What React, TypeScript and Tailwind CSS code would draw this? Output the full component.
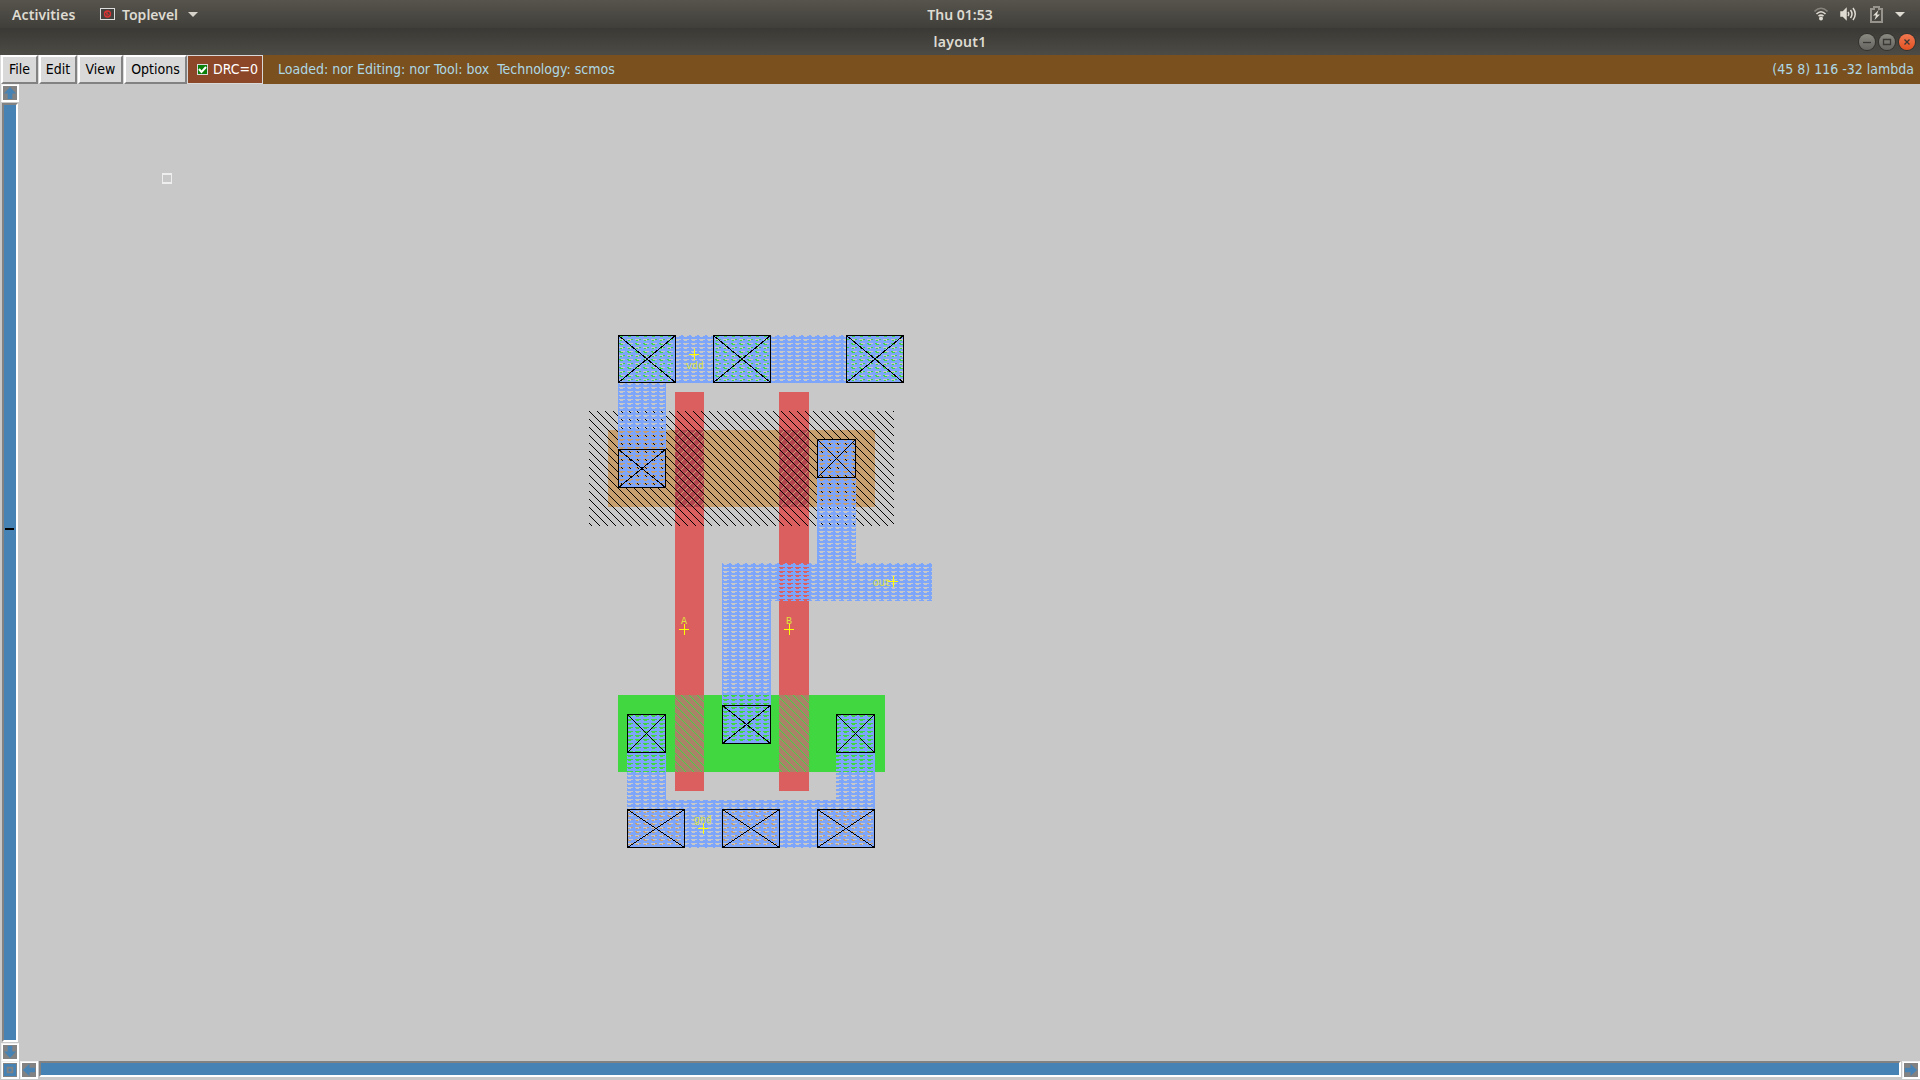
import React from "react";

type Box = [number, number, number, number];

const metal: Box[] = [
  [618, 336, 286, 48],
  [618, 384, 48, 105],
  [817, 440, 39, 124],
  [722, 564, 210, 38],
  [722, 602, 49, 143],
  [627, 715, 39, 86],
  [836, 715, 39, 86],
  [627, 801, 248, 48],
];
const contacts: Box[] = [
  [618, 336, 58, 48],
  [713, 336, 58, 48],
  [846, 336, 58, 48],
  [618, 450, 48, 39],
  [817, 440, 39, 39],
  [627, 715, 39, 39],
  [722, 706, 49, 39],
  [836, 715, 39, 39],
  [627, 810, 58, 39],
  [722, 810, 58, 39],
  [817, 810, 58, 39],
];
const poly: Box[] = [
  [675, 393, 29, 399],
  [779, 393, 30, 399],
];
const labels = [
  { t: "vdd", x: 686, y: 370, cx: 694, cy: 355 },
  { t: "out", x: 873, y: 587, cx: 893, cy: 582 },
  { t: "A", x: 681, y: 625, cx: 684, cy: 630 },
  { t: "B", x: 786, y: 625, cx: 789, cy: 630 },
  { t: "gnd", x: 694, y: 824, cx: 703, cy: 829 },
];

const rect = (b: Box, fill: string, key?: React.Key) => (
  <rect key={key} x={b[0]} y={b[1]} width={b[2]} height={b[3]} fill={fill} />
);

function Diagonal({ id, color, up }: { id: string; color: string; up?: boolean }) {
  return (
    <pattern id={id} width="8" height="8" patternUnits="userSpaceOnUse">
      {[0, 1, 2, 3, 4, 5, 6, 7].map((i) => (
        <rect key={i} x={up ? 7 - i : (i + 1) % 8} y={i} width="1" height="1" fill={color} />
      ))}
    </pattern>
  );
}

function Layout() {
  return (
    <svg className="block h-[977px] w-[1901px]" viewBox="19 85 1901 977" shapeRendering="crispEdges">
      <defs>
        <Diagonal id="well" color="#000" />
        <Diagonal id="nfet" color="#41d741" />
        <Diagonal id="pfet" color="#c89f6f" up />
        <pattern id="metal" width="8" height="4" patternUnits="userSpaceOnUse">
          <path fill="#7da5fa" d="M1 0h2v1h-2zM0 1h4v1h-4zM7 1h1v1h-1zM0 2h8v2h-8z" />
        </pattern>
        <pattern id="nsub" width="8" height="8" patternUnits="userSpaceOnUse">
          <path fill="#41d741" d="M3 0h2v2h-2zM7 4h1v2h-1zM0 4h1v2h-1zM5 1h2v1h-2zM4 5h2v1h-2z" />
        </pattern>
        <pattern id="psub" width="8" height="8" patternUnits="userSpaceOnUse">
          <path fill="#c89f6f" d="M3 0h2v2h-2zM7 4h1v2h-1zM0 4h1v2h-1zM5 1h2v1h-2zM4 5h2v1h-2z" />
        </pattern>
      </defs>
      {rect([608, 431, 267, 77], "#c89f6f")}
      {rect([618, 696, 267, 77], "#41d741")}
      {poly.map((b, i) => rect(b, "#db5f5f", i))}
      {poly.map((b, i) => (
        <g key={i}>
          {rect([b[0], 431, b[2], 77], "#b4464f")}
          {rect([b[0], 431, b[2], 77], "url(#pfet)")}
          {rect([b[0], 696, b[2], 77], "#aa8267")}
          {rect([b[0], 696, b[2], 77], "url(#nfet)")}
        </g>
      ))}
      {rect([589, 412, 305, 115], "url(#well)")}
      {contacts.slice(0, 3).map((b, i) => rect(b, "url(#nsub)", i))}
      {contacts.slice(8).map((b, i) => rect(b, "url(#psub)", i))}
      {metal.map((b, i) => rect(b, "url(#metal)", i))}
      {contacts.map(([x, y, w, h], i) => (
        <path
          key={i}
          d={`M${x + 0.5} ${y + 0.5}h${w - 1}v${h - 1}h${1 - w}zl${w - 1} ${h - 1}m0 ${1 - h}l${1 - w} ${h - 1}`}
          fill="none"
          stroke="#000"
        />
      ))}
      {labels.map((l) => (
        <g key={l.t}>
          <text x={l.x} y={l.y} fill="#dde23c" fontFamily="'Liberation Mono', monospace" fontSize="10">
            {l.t}
          </text>
          <path d={`M${l.cx - 5} ${l.cy + 0.5}h10M${l.cx + 0.5} ${l.cy - 5}v11`} stroke="#ff0" />
        </g>
      ))}
      <rect x="162.5" y="175" width="9" height="9" fill="none" stroke="#eee" strokeWidth="1.5" />
    </svg>
  );
}

function MenuButton({ label, className }: { label: string; className: string }) {
  return (
    <div
      className={`h-[29px] border-t-2 border-l-2 border-r-2 border-b-2 border-t-white border-l-white border-r-[#828282] border-b-[#828282] bg-[#d9d9d9] text-center text-[14px] leading-[25px] text-black ${className}`}
    >
      {label}
    </div>
  );
}

const arrows = {
  up: "M7.5 1L14 8H10V14H5V8H1z",
  down: "M7.5 14L14 7H10V1H5V7H1z",
  left: "M1 7.5L8 1V5H14V10H8V14z",
  right: "M14 7.5L7 1V5H1V10H7V14z",
  zoom: "M1 1H14V14H1zM4 4V11H11V4zM6 6H9V9H6z",
};

function ScrollButton({ kind }: { kind: keyof typeof arrows }) {
  return (
    <div className="h-[18px] w-[18px] shrink-0 border-[1px] border-t-[#eee] border-l-[#eee] border-r-white border-b-white bg-white p-px">
      <svg className="block h-[14px] w-[14px] bg-[#828282]" viewBox="0 0 15 15">
        <path d={arrows[kind]} fill="#4682b4" fillRule="evenodd" />
      </svg>
    </div>
  );
}

function WindowButton({ close, children }: { close?: boolean; children: React.ReactNode }) {
  return (
    <div
      className={`flex h-4 w-4 items-center justify-center rounded-full shadow-[0_0_0_1px_#33322e] ${close ? "bg-linear-to-b from-[#f27850] to-[#e2501f]" : "bg-linear-to-b from-[#8a8982] to-[#66655f]"}`}
    >
      <svg className="h-4 w-4" viewBox="0 0 16 16" fill="none" stroke="#3a3935" strokeWidth="1.3">
        {children}
      </svg>
    </div>
  );
}

export default function App() {
  return (
    <div className="flex h-[1080px] w-[1920px] flex-col overflow-hidden bg-[#c8c8c8] font-['DejaVu_Sans_Condensed','DejaVu_Sans',sans-serif]">
      <header className="grid h-[28px] grid-cols-3 items-center bg-linear-to-b from-[#57544d] to-[#403f3a] font-['Noto_Sans',sans-serif] text-[14px] font-semibold text-[#dedbd2]">
        <div className="flex items-center">
          <span className="ml-[12px] w-[88px] tracking-[0.1px]">Activities</span>
          <svg className="h-[12px] w-[15px]" viewBox="0 0 15 12">
            <rect x=".5" y=".5" width="14" height="11" fill="#44423e" stroke="#ddd" />
            <circle cx="7.5" cy="6" r="3" fill="none" stroke="#d33" strokeWidth="1.3" />
            <path d="M5 4l5 4M7 3v5" stroke="#d33" />
          </svg>
          <span className="ml-[7px] w-[62px]">Toplevel</span>
          <svg className="ml-[4px] h-[5px] w-[10px]" viewBox="0 0 10 5"><path d="M0 0h10L5 5z" fill="#d6d3cb" /></svg>
        </div>
        <div className="text-center">Thu 01:53</div>
        <div className="flex items-center justify-end pr-[15px]">
          <svg className="h-[14px] w-[14px]" viewBox="0 0 14 14" fill="none" strokeWidth="1.6">
            <path d="M.5 4.5Q7-2 13.500 4.500" stroke="#85837c" />
            <path d="M2.500 7Q7 2.500 11.500 7" stroke="#dedbd2" />
            <path d="M4.500 9.200Q7 7 9.500 9.200" stroke="#dedbd2" />
            <circle cx="7" cy="11.500" r="2" fill="#dedbd2" />
          </svg>
          <svg className="ml-[12px] h-[14px] w-[17px]" viewBox="0 0 17 14" fill="none" stroke="#dedbd2" strokeWidth="1.5">
            <path d="M1 5h2l3-3v10l-3-3h-2z" fill="#dedbd2" />
            <path d="M8 5q1.500 2 0 4M10.500 3q3 4 0 8M13 1q4.500 6 0 12" />
          </svg>
          <svg className="ml-[13px] h-[17px] w-[13px]" viewBox="0 0 13 17">
            <path d="M1 3h3V1h5v2h3v13H1z" fill="none" stroke="#96948d" strokeWidth="2" />
            <path d="M8.500 4L3 9.500h3L4.500 14L10 8.500H7z" fill="#dedbd2" />
          </svg>
          <svg className="ml-[12px] h-[5px] w-[10px]" viewBox="0 0 10 5"><path d="M0 0h10L5 5z" fill="#dedbd2" /></svg>
        </div>
      </header>
      <div className="grid h-[27px] grid-cols-3 items-center bg-linear-to-b from-[#3a3935] to-[#4c4b45] font-['Noto_Sans',sans-serif] text-[14px] font-semibold text-[#dedbd2]">
        <div />
        <div className="text-center tracking-[0.3px]">layout1</div>
        <div className="flex items-center justify-end gap-1 pr-[5px]">
          <WindowButton><path d="M4 8.500h8" /></WindowButton>
          <WindowButton><path d="M4.500 5.500h7v5h-7z" /></WindowButton>
          <WindowButton close><path d="M5.500 5.500l5 5m0-5l-5 5" /></WindowButton>
        </div>
      </div>
      <div className="flex h-[29px] items-center bg-[#7a501e] text-[14px]">
        <div className="flex h-[29px] gap-px bg-[#d9d9d9] pl-px">
          <MenuButton label="File" className="w-[37px]" />
          <MenuButton label="Edit" className="w-[38px]" />
          <MenuButton label="View" className="w-[45px]" />
          <MenuButton label="Options" className="w-[63px]" />
        </div>
        <div className="flex h-[29px] w-[76px] items-center border border-[#d9d9d9] bg-[#8c4628] text-white">
          <svg className="ml-[9px] h-[11px] w-[11px] shrink-0" viewBox="0 0 11 11">
            <path d="M0 0h11v11H0z" fill="#d9d9d9" /><path d="M1 1h9v9H1z" fill="#0a800a" />
            <path d="M2 5l2.500 3L9 3" fill="none" stroke="#fff" strokeWidth="2" />
          </svg>
          <span className="ml-[5px]">DRC=0</span>
        </div>
        <span className="ml-[15px] whitespace-pre text-[#add8e6]">{"Loaded: nor Editing: nor Tool: box  Technology: scmos"}</span>
        <span className="ml-auto mr-[6px] text-[#add8e6]">(45 8) 116 -32 lambda</span>
      </div>
      <div className="flex h-[977px]">
        <div className="flex w-[19px] shrink-0 flex-col pl-px">
          <ScrollButton kind="up" />
          <div className="my-px ml-px w-[16px] grow border-2 border-t-[#828282] border-l-[#828282] border-r-white border-b-white bg-[#4682b4] pt-[423px] pl-[1px]">
            <div className="h-[2px] w-[9px] bg-black" />
          </div>
          <ScrollButton kind="down" />
        </div>
        <Layout />
      </div>
      <div className="flex h-[18px] pl-px">
        <ScrollButton kind="zoom" />
        <div className="ml-px flex grow">
          <ScrollButton kind="left" />
          <div className="mx-px h-[16px] grow border-2 border-t-[#828282] border-l-[#828282] border-r-white border-b-white bg-[#4682b4]" />
          <ScrollButton kind="right" />
        </div>
      </div>
    </div>
  );
}
